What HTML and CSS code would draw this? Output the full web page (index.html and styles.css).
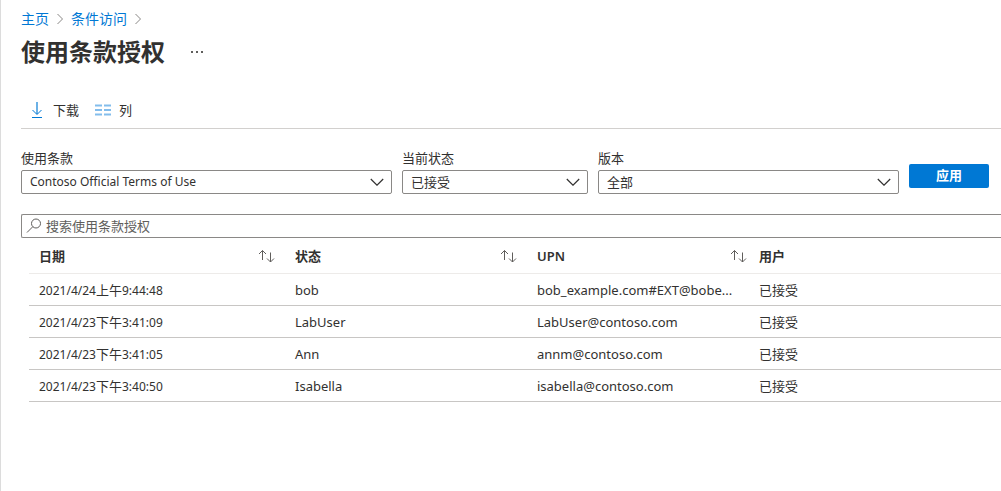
FILE: index.html
```html
<!DOCTYPE html>
<html lang="zh-CN">
<head>
<meta charset="utf-8">
<meta name="viewport" content="width=device-width, initial-scale=1">
<title>使用条款授权</title>
<link rel="stylesheet" href="styles.css">
</head>
<body>
<svg class="sprite" aria-hidden="true">
  <symbol id="chevron-right" viewBox="0 0 8 12"><path d="M1.500 1l5 5-5 5"/></symbol>
  <symbol id="chevron-down" viewBox="0 0 14 8"><path d="M.8 1L7 7.200 13.200 1"/></symbol>
  <symbol id="sort" viewBox="0 0 17 14"><path d="M4.500 11V1.500M1 5l3.500-3.500L8 5M12.500 3.500V13M9 9.500l3.500 3.500L16 9.500"/></symbol>
</svg>
<main class="page">
  <nav class="breadcrumb" aria-label="导航">
    <a href="#">主页</a>
    <svg class="crumb-arrow"><use href="#chevron-right"/></svg>
    <a href="#">条件访问</a>
    <svg class="crumb-arrow"><use href="#chevron-right"/></svg>
  </nav>
  <header class="heading">
    <h1>使用条款授权</h1>
    <button class="more" type="button" aria-label="更多">
      <svg width="12" height="4" viewBox="0 0 12 4"><path d="M0 1h2v2H0zM5 1h2v2H5zM10 1h2v2h-2z" fill="#605e5c"/></svg>
    </button>
  </header>
  <div class="toolbar">
    <button class="command" type="button">
      <svg width="16" height="18" viewBox="0 0 16 18"><path class="download-stem" d="M8 1v12"/><path class="download-head" d="M3.500 9L8 13.500 12.500 9M3 16.500h10"/></svg>
      下载
    </button>
    <button class="command" type="button">
      <svg width="16" height="18" viewBox="0 0 16 18"><path class="columns" d="M0 4.500h7M9 4.500h7M0 9h7M9 9h7M0 13.500h7M9 13.500h7"/></svg>
      列
    </button>
  </div>
  <form class="filters">
    <div class="field field-terms">
      <label for="terms">使用条款</label>
      <div class="select-box">
        <select id="terms"><option>Contoso Official Terms of Use</option></select>
        <svg class="select-arrow"><use href="#chevron-down"/></svg>
      </div>
    </div>
    <div class="field field-state">
      <label for="state">当前状态</label>
      <div class="select-box">
        <select id="state"><option>已接受</option></select>
        <svg class="select-arrow"><use href="#chevron-down"/></svg>
      </div>
    </div>
    <div class="field field-version">
      <label for="version">版本</label>
      <div class="select-box">
        <select id="version"><option>全部</option></select>
        <svg class="select-arrow"><use href="#chevron-down"/></svg>
      </div>
    </div>
    <button class="apply" type="button">应用</button>
  </form>
  <div class="search">
    <svg width="16" height="16" viewBox="0 0 16 16"><circle cx="10" cy="5.500" r="4.500"/><path d="M6.800 8.700L1 14.500"/></svg>
    <input type="search" aria-label="搜索使用条款授权" placeholder="搜索使用条款授权">
  </div>
  <table class="grid">
    <colgroup><col class="col-date"><col class="col-state"><col class="col-upn"><col></colgroup>
    <thead>
      <tr>
        <th scope="col"><div class="head">日期<svg class="sort"><use href="#sort"/></svg></div></th>
        <th scope="col"><div class="head">状态<svg class="sort"><use href="#sort"/></svg></div></th>
        <th scope="col"><div class="head head-upn"><span>UPN</span><svg class="sort"><use href="#sort"/></svg></div></th>
        <th scope="col"><div class="head">用户</div></th>
      </tr>
    </thead>
    <tbody>
      <tr><td class="date">2021/4/24<span>上午</span>9:44:48</td><td>bob</td><td>bob_example.com#EXT@bobe...</td><td>已接受</td></tr>
      <tr><td class="date">2021/4/23<span>下午</span>3:41:09</td><td>LabUser</td><td>LabUser@contoso.com</td><td>已接受</td></tr>
      <tr><td class="date">2021/4/23<span>下午</span>3:41:05</td><td>Ann</td><td>annm@contoso.com</td><td>已接受</td></tr>
      <tr><td class="date">2021/4/23<span>下午</span>3:40:50</td><td>Isabella</td><td>isabella@contoso.com</td><td>已接受</td></tr>
    </tbody>
  </table>
</main>
</body>
</html>
```
FILE: styles.css
```css
* { box-sizing: border-box; }
body {
  margin: 0;
  background: #fff;
  color: #323130;
  font: 13px/18px "Noto Sans", "Noto Sans CJK SC", sans-serif;
}
button, input, select { font: inherit; color: inherit; }
button { border: 0; padding: 0; background: none; }
svg { display: block; flex: none; fill: none; stroke: currentColor; }
.sprite { position: absolute; width: 0; height: 0; }
.page {
  min-height: 100vh;
  border-left: 1px solid #dcdcdc;
  padding: 9px 0 0 20px;
  overflow: hidden;
}
.breadcrumb { display: flex; align-items: center; gap: 7px; font-size: 14px; line-height: 20px; }
.breadcrumb a { color: #0078d4; text-decoration: none; }
.crumb-arrow { width: 8px; height: 12px; color: #8a8886; }
.heading { display: flex; align-items: center; gap: 26px; height: 46px; }
h1 { margin: 0; font-size: 24px; line-height: 32px; font-weight: 700; }
.more svg { stroke: none; }
.toolbar {
  display: flex;
  align-items: center;
  gap: 16px;
  height: 54px;
  padding: 16px 0 0 8px;
  border-bottom: 1px solid #d2d0ce;
}
.command { display: flex; align-items: center; gap: 8px; }
.download-stem { stroke: #6bb1e6; stroke-width: 2; }
.download-head { stroke: #0078d4; }
.columns { stroke: #83bdec; stroke-width: 2; }
.filters { display: flex; align-items: flex-start; gap: 10px; padding: 20px 12px 0 0; }
.field { min-width: 0; }
.field label { display: block; height: 21px; }
.field-terms { flex: 371 1 0; }
.field-state { flex: 186 1 0; }
.field-version { flex: 301 1 0; }
.select-box { position: relative; }
select {
  display: block;
  width: 100%;
  height: 24px;
  padding: 0 30px 0 8px;
  border: 1px solid #8a8886;
  border-radius: 2px;
  background: #fff;
  appearance: none;
}
#terms { font-size: 12px; }
.select-arrow { position: absolute; right: 8px; top: 8px; width: 14px; height: 8px; stroke-width: 1.2; pointer-events: none; }
.apply {
  width: 80px;
  height: 24px;
  margin-top: 15px;
  padding-bottom: 2px;
  border-radius: 2px;
  background: #0078d4;
  color: #fff;
  font-weight: 700;
}
.search {
  display: flex;
  align-items: center;
  gap: 4px;
  height: 24px;
  margin-top: 20px;
  padding-left: 4px;
  border: 1px solid #8a8886;
  border-right: 0;
  border-radius: 2px 0 0 2px;
  color: #605e5c;
}
.search input { flex: 1; min-width: 0; border: 0; padding: 0; outline: 0; background: none; }
.search input::placeholder { color: #605e5c; opacity: 1; }
.grid { width: calc(100% - 8px); margin-left: 8px; border-collapse: collapse; table-layout: fixed; }
.col-date { width: 256px; }
.col-state { width: 242px; }
.col-upn { width: 222px; }
th, td { height: 32px; padding: 2px 0 0 10px; text-align: left; white-space: nowrap; border-bottom: 1px solid #c8c6c4; }
th { height: 35px; border-bottom-color: #edebe9; font-weight: 700; }
.head { display: flex; align-items: center; justify-content: space-between; padding-right: 10px; }
.head-upn { padding-right: 2px; font-weight: 600; }
.sort { width: 17px; height: 14px; color: #605e5c; }
.date { font-size: 12px; }
.date span { font-size: 13px; }
```
